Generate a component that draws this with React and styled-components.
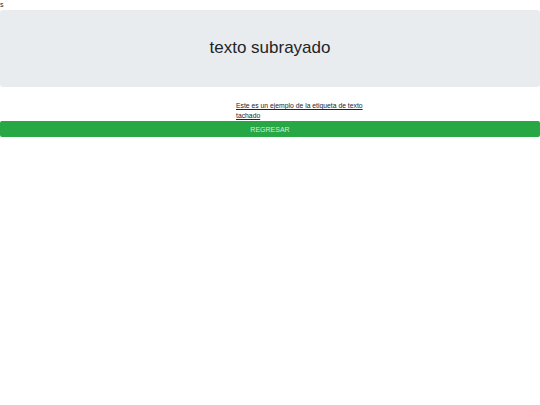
import React from "react";
import styled, { createGlobalStyle } from "styled-components";

const Global = createGlobalStyle`
  html, body { margin: 0; padding: 0; background: #fff; }
  body { font-family: "Liberation Sans", Arial, sans-serif; color: #212529; }
`;

const Page = styled.div`
  display: flex;
  flex-direction: column;
`;

const Tiny = styled.div`
  font-size: 7px;
  line-height: 10px;
  height: 10px;
  color: #212529;
`;

const Jumbotron = styled.div`
  background: #e9ecef;
  border-radius: 3px;
  height: 77px;
  display: flex;
  align-items: center;
  justify-content: center;
`;

const Title = styled.h1`
  margin: 0 0 2px;
  font-size: 17px;
  font-weight: 400;
  color: #212529;
`;

const Row = styled.div`
  display: flex;
  padding: 14px 0 0 236px;
`;

const Paragraph = styled.p`
  margin: 0;
  width: 130px;
  font-size: 6.8px;
  line-height: 10px;
  color: #212529;
  text-decoration: underline;
`;

const Button = styled.button`
  height: 16px;
  border: none;
  border-radius: 2px;
  background: #28a745;
  color: rgba(255, 255, 255, 0.8);
  font-family: "Liberation Sans", Arial, sans-serif;
  font-size: 7px;
  text-transform: uppercase;
  padding: 0;
  width: 100%;
`;

export default function App() {
  return (
    <>
      <Global />
      <Page>
        <Tiny>s</Tiny>
        <Jumbotron>
          <Title>texto subrayado</Title>
        </Jumbotron>
        <Row>
          <Paragraph>Este es un ejemplo de la etiqueta de texto tachado</Paragraph>
        </Row>
        <Button>Regresar</Button>
      </Page>
    </>
  );
}
